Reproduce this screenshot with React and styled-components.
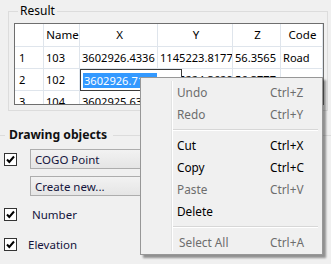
import React from "react";
import styled, { createGlobalStyle } from "styled-components";

const GlobalStyle = createGlobalStyle`
    html, body {
        margin: 0;
        padding: 0;
        background: #f0f0f0;
    }
    body {
        font-family: "Noto Sans", "Open Sans", sans-serif;
        font-size: 11.5px;
        color: #000;
    }
`;

const Page = styled.div`
    position: relative;
    width: 331px;
    height: 264px;
    overflow: hidden;
    background: #f0f0f0;
`;

const GroupBox = styled.fieldset`
    box-sizing: border-box;
    width: 320px;
    height: 107px;
    margin: 4px 0 0 8px;
    padding: 5px 4px 5px 5px;
    border: 1px solid #dcdcdc;
    border-radius: 0;
    min-inline-size: 0;
`;

const Legend = styled.legend`
    padding: 0 2px;
    margin-left: 4px;
    font-size: 12px;
    line-height: 14px;
`;

const TableBox = styled.div`
    position: relative;
    box-sizing: border-box;
    width: 310px;
    height: 82px;
    border: 1px solid #6e6e6e;
    background: #fff;
    overflow: hidden;
    font-size: 11.1px;
`;

const Grid = styled.div`
    display: grid;
    grid-template-columns: 29px 36px 78px 75px 48px 42px;
    grid-auto-rows: 22px;
    grid-template-rows: 23px;
`;

const Cell = styled.div`
    box-sizing: border-box;
    border-right: 1px solid #dfe5ec;
    border-bottom: 1px solid #dfe5ec;
    padding: 0 0 0 ${(p) => (p.$first ? 4 : 2)}px;
    display: flex;
    align-items: center;
    justify-content: ${(p) => (p.$head ? "center" : "flex-start")};
    white-space: nowrap;
    overflow: hidden;
    line-height: 14px;
    font-size: ${(p) => (p.$head ? 11.5 : 11.1)}px;
`;

const Editor = styled.div`
    position: absolute;
    left: 65px;
    top: 45px;
    box-sizing: border-box;
    width: 102px;
    height: 22px;
    border: 1px solid #3c3c3c;
    background: #fff;
    display: flex;
    align-items: center;
    padding-left: 2px;
`;

const Selected = styled.span`
    background: #3399ff;
    color: #fff;
    line-height: 15px;
    padding-left: 1px;
`;

const Section = styled.div`
    display: flex;
    flex-direction: column;
    margin-top: 15px;
`;

const SectionHead = styled.div`
    display: flex;
    align-items: center;
    gap: 4px;
    height: 16px;
    font-size: 12.2px;
    font-weight: 700;
    color: #111;

    &::before {
        content: "";
        width: 5px;
        border-top: 1px solid #dcdcdc;
        margin-top: 3px;
    }
    &::after {
        content: "";
        flex: 1;
        border-top: 1px solid #dcdcdc;
        margin-top: 3px;
        margin-left: 2px;
    }
`;

const Row = styled.div`
    display: flex;
    align-items: center;
    height: 20px;
    margin-top: ${(p) => p.$gap}px;
`;

const Box = styled.span`
    box-sizing: border-box;
    width: 13px;
    height: 13px;
    margin-left: 4px;
    border: 1px solid #333;
    background: #fff;
    display: flex;
    align-items: center;
    justify-content: center;
    flex: none;
`;

const Combo = styled.div`
    box-sizing: border-box;
    width: 280px;
    height: 20px;
    margin-left: ${(p) => p.$left}px;
    border: 1px solid #adadad;
    background: linear-gradient(#f2f2f2, #e5e5e5);
    padding-left: 4px;
    display: flex;
    align-items: center;
    color: #14143c;
`;

const Label = styled.span`
    margin-left: ${(p) => p.$left}px;
    color: #14143c;
`;

const Menu = styled.div`
    position: absolute;
    left: 140px;
    top: 77px;
    box-sizing: border-box;
    width: 183px;
    height: 178px;
    padding: 3px 2px;
    border: 1px solid #979797;
    background: #f0f0f0;
    box-shadow: 3px 3px 2px rgba(0, 0, 0, 0.4);
    font-size: 11.8px;

    &::before {
        content: "";
        position: absolute;
        left: 30px;
        top: 3px;
        bottom: 3px;
        border-left: 1px solid #e2e3e3;
        border-right: 1px solid #fff;
    }
`;

const Item = styled.div`
    display: flex;
    align-items: center;
    height: 22px;
    padding-left: ${(p) => p.$pad || 34}px;
    color: ${(p) => (p.$disabled ? "#6d6d6d" : "#000")};

    .name {
        width: ${(p) => 93 - ((p.$pad || 34) - 34)}px;
    }
`;

const Separator = styled.div`
    height: 9px;
    margin-left: 30px;
    margin-right: 2px;
    display: flex;
    align-items: center;

    &::after {
        content: "";
        flex: 1;
        border-top: 1px solid #d7d7d7;
        border-bottom: 1px solid #fff;
    }
`;

const Check = () => (
    <svg width="9" height="9" viewBox="0 0 9 9">
        <polyline points="1,4.5 3.3,7 8,1.5" fill="none" stroke="#000" strokeWidth="2" />
    </svg>
);

const Checkbox = () => (
    <Box>
        <Check />
    </Box>
);

const header = ["", "Name", "X", "Y", "Z", "Code"];
const rows = [
    ["1", "103", "3602926.4336", "1145223.8177", "56.3565", "Road"],
    ["2", "102", "3602926.7148", "1145224.3629", "56.3777", ""],
    ["3", "104", "3602925.6312", "1145222.9041", "56.2984", ""],
];

const menuItems = [
    { label: "Undo", key: "Ctrl+Z", disabled: true },
    { label: "Redo", key: "Ctrl+Y", disabled: true },
    { sep: true },
    { label: "Cut", key: "Ctrl+X" },
    { label: "Copy", key: "Ctrl+C" },
    { label: "Paste", key: "Ctrl+V", disabled: true },
    { label: "Delete", key: "" },
    { sep: true },
    { label: "Select All", key: "Ctrl+A", disabled: true, pad: 36 },
];

export default function App() {
    return (
        <Page>
            <GlobalStyle />
            <GroupBox>
                <Legend>Result</Legend>
                <TableBox>
                    <Grid>
                        {header.map((h, i) => (
                            <Cell key={"h" + i} $head>
                                {h}
                            </Cell>
                        ))}
                        {rows.map((r) =>
                            r.map((c, i) => (
                                <Cell key={r[0] + "-" + i} $first={i === 0}>
                                    {c}
                                </Cell>
                            ))
                        )}
                    </Grid>
                    <Editor>
                        <Selected>3602926.7148</Selected>
                    </Editor>
                </TableBox>
            </GroupBox>

            <Section>
                <SectionHead>Drawing objects</SectionHead>
                <Row $gap={7}>
                    <Checkbox />
                    <Combo $left={13}>COGO Point</Combo>
                </Row>
                <Row $gap={7}>
                    <Combo $left={30}>Create new...</Combo>
                </Row>
                <Row $gap={8}>
                    <Checkbox />
                    <Label $left={15}>Number</Label>
                </Row>
                <Row $gap={10}>
                    <Checkbox />
                    <Label $left={11}>Elevation</Label>
                </Row>
            </Section>

            <Menu>
                {menuItems.map((m, i) =>
                    m.sep ? (
                        <Separator key={i} />
                    ) : (
                        <Item key={i} $disabled={m.disabled} $pad={m.pad}>
                            <span className="name">{m.label}</span>
                            <span>{m.key}</span>
                        </Item>
                    )
                )}
            </Menu>
        </Page>
    );
}
